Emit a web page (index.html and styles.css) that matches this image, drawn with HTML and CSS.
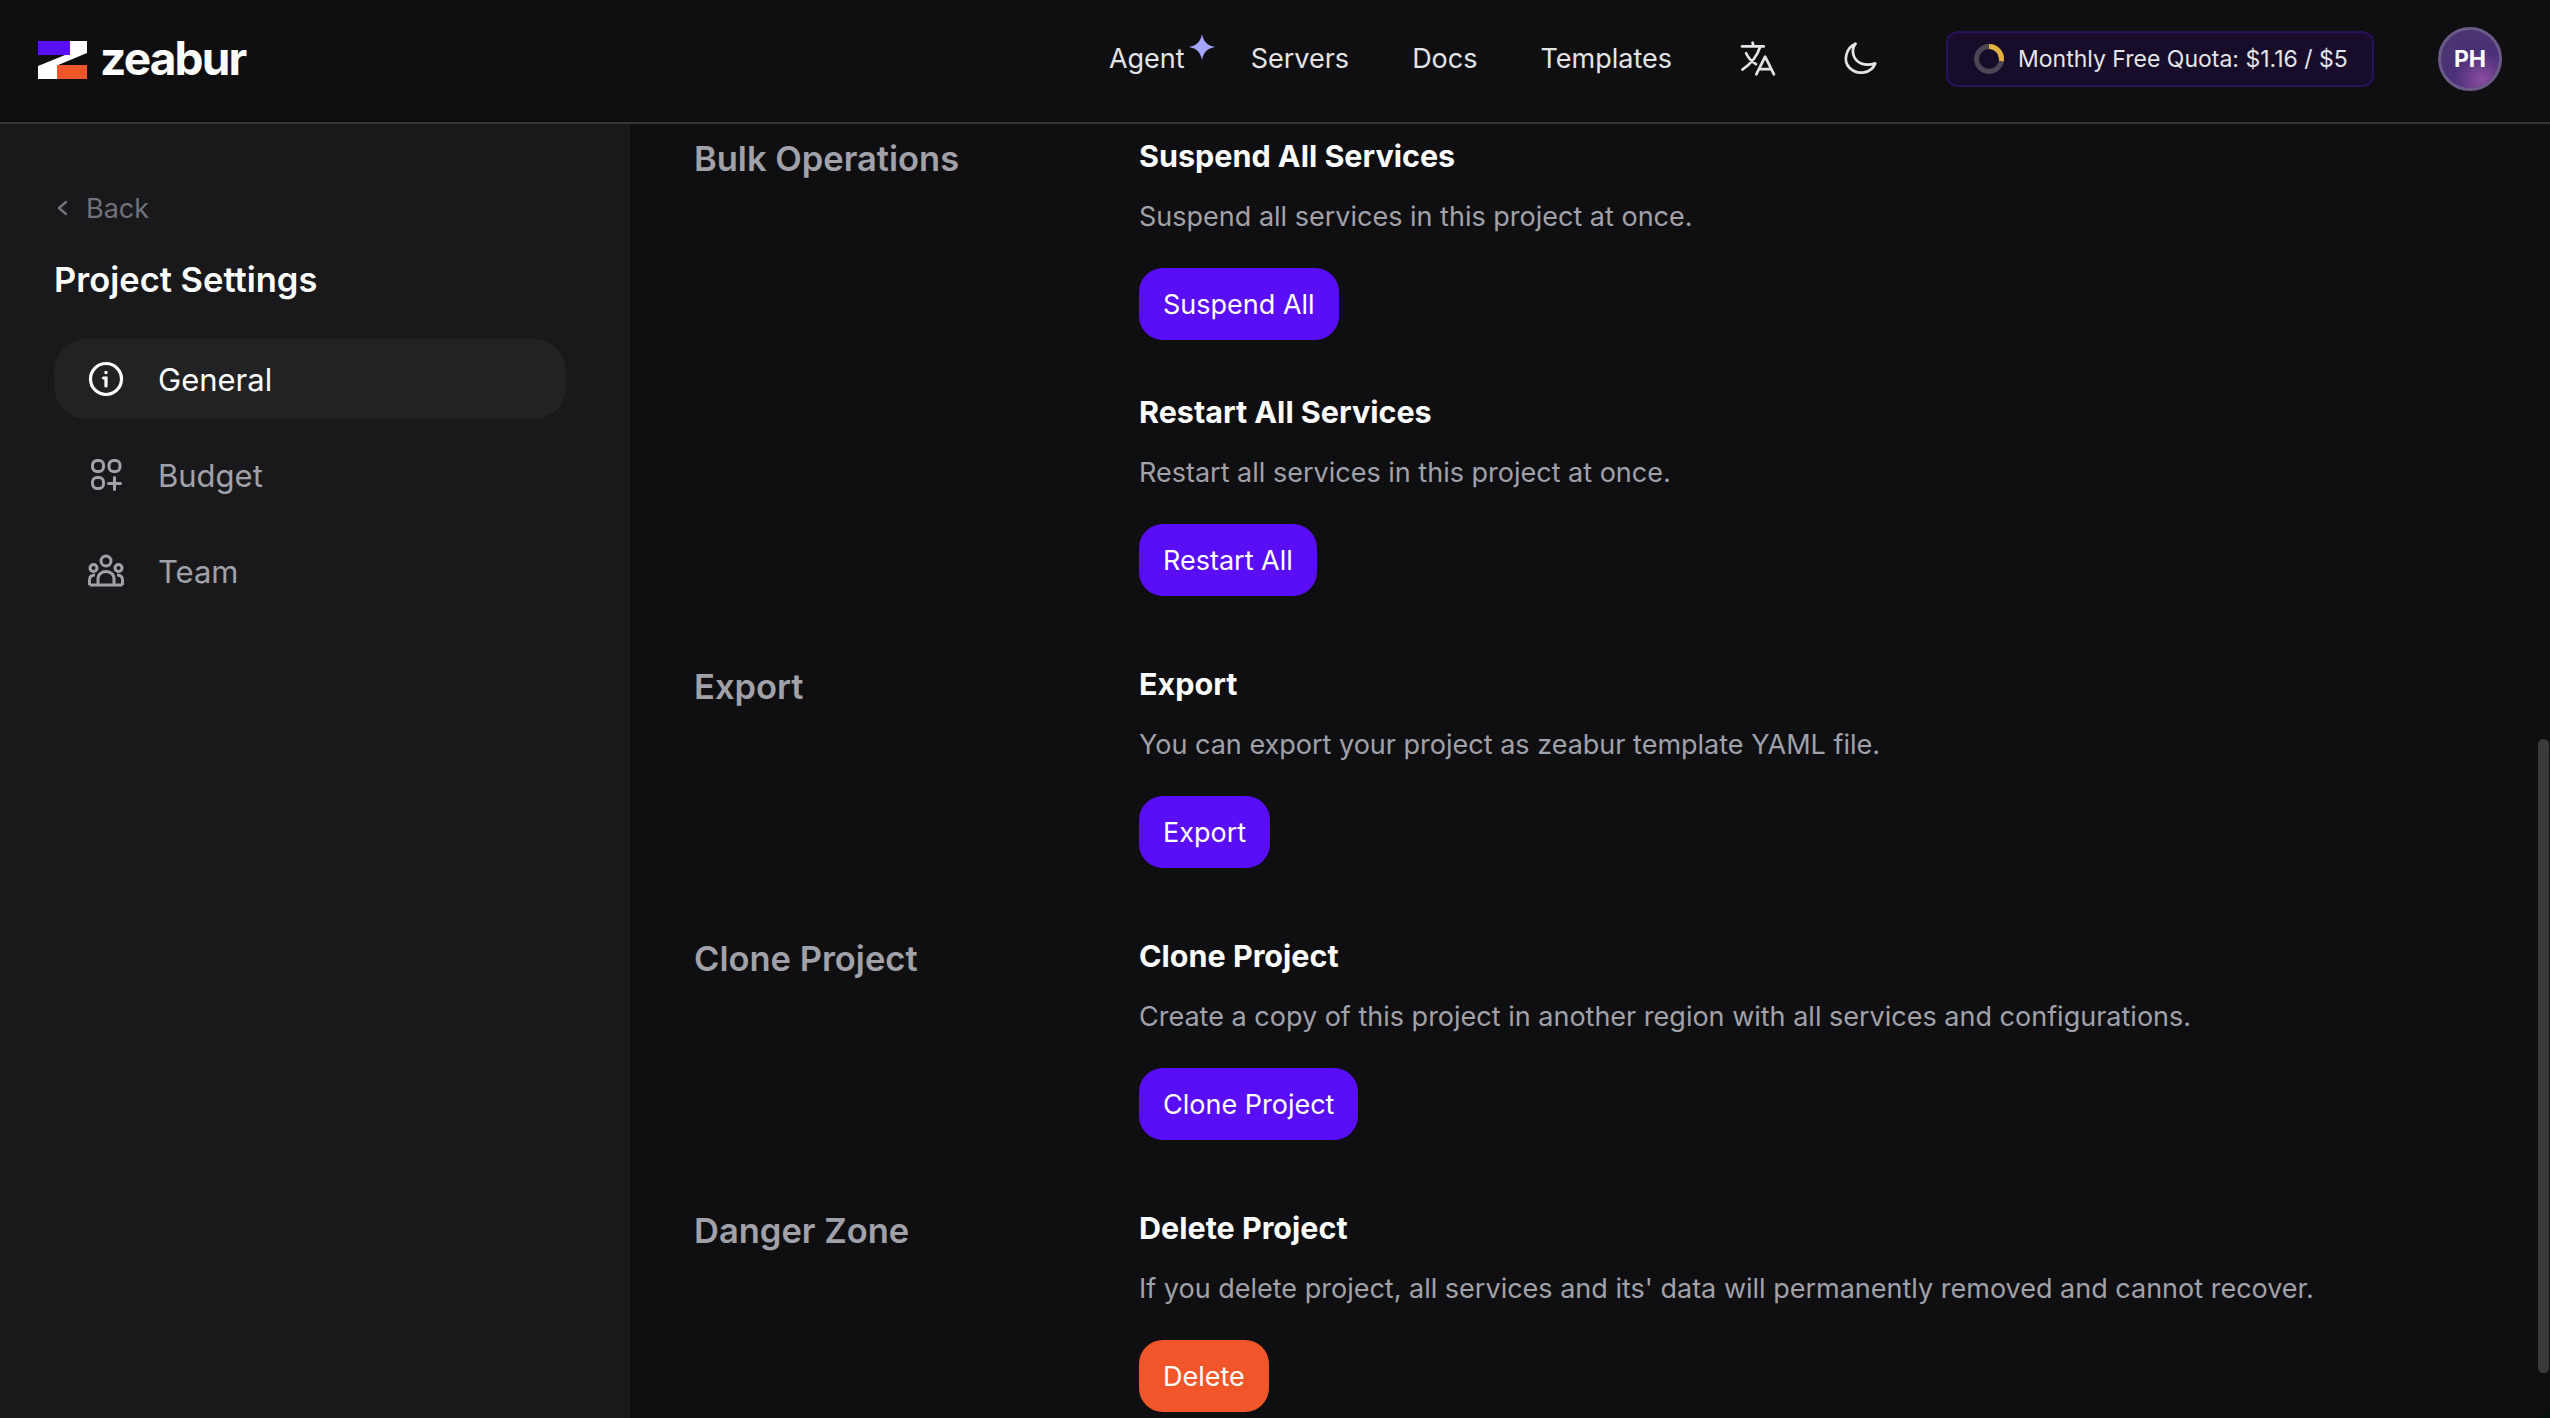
FILE: index.html
```html
<!DOCTYPE html>
<html lang="en">
<head>
<meta charset="utf-8">
<title>Project Settings</title>
<link rel="stylesheet" href="styles.css">
</head>
<body>
<div class="app">
  <header class="topbar">
    <a class="brand">
      <svg class="logo" viewBox="38 41 49 38" width="49" height="38">
        <path fill="#fff" d="M70 41H87V53L57 65.5V79H38V66L70 53Z"/>
        <rect fill="#5a0ef5" x="38" y="41" width="32" height="14"/>
        <rect fill="#f0562a" x="57" y="65" width="30" height="14"/>
      </svg>
      <span class="brand-name">zeabur</span>
    </a>
    <nav class="nav">
      <a class="nav-link agent">Agent
        <svg class="spark" viewBox="0 0 26 26" width="26" height="26"><path fill="#a5a5fb" d="M13 0C14.5 7.5 18 11.5 26 13C18 14.5 14.500 18.500 13 26C11.500 18.500 8 14.500 0 13C8 11.500 11.500 7.500 13 0Z"/></svg>
      </a>
      <a class="nav-link">Servers</a>
      <a class="nav-link">Docs</a>
      <a class="nav-link">Templates</a>
    </nav>
    <svg class="tool lang" viewBox="118 64 106 106" width="36" height="36" fill="none" stroke="#e4e4e7" stroke-width="8" stroke-linecap="round" stroke-linejoin="round">
      <path d="M124 80H188M155 69L158 80M178 80C168 110 150 132 125 148M136 100C143 115 153 125 165 132M166 162L192 110L218 162M174 147H210"/>
    </svg>
    <svg class="tool moon" viewBox="428 66 106 106" width="36" height="36" fill="none" stroke="#e4e4e7" stroke-width="8" stroke-linecap="round" stroke-linejoin="round">
      <path d="M468 74C440 85 430 125 450 145C475 170 515 160 526 132C495 142 468 130 462 108C458 95 460 84 468 74Z"/>
    </svg>
    <div class="quota">
      <svg class="ring" viewBox="0 0 30 30" width="30" height="30" fill="none" stroke-width="5">
        <circle cx="15" cy="15" r="12.500" stroke="#4b4654"/>
        <path d="M15 2.500A12.500 12.500 0 0 1 27.300 17" stroke="#e3b23c"/>
      </svg>
      <span class="quota-text">Monthly Free Quota: $1.16 / $5</span>
    </div>
    <div class="avatar">PH</div>
  </header>
  <div class="body">
    <aside class="sidebar">
      <a class="back">
        <svg viewBox="0 0 12 16" width="12" height="16" fill="none" stroke="#71717a" stroke-width="2.500" stroke-linecap="round" stroke-linejoin="round"><path d="M10 2L3 8L10 14"/></svg>
        <span>Back</span>
      </a>
      <h1 class="side-title">Project Settings</h1>
      <ul class="menu">
        <li class="menu-item active">
          <svg viewBox="0 0 36 36" width="36" height="36" fill="none" stroke="currentColor" stroke-width="3.200" stroke-linecap="round"><circle cx="18" cy="18" r="15.500"/><path d="M15.500 17H18V25"/><circle cx="18" cy="11.500" r="1" fill="currentColor" stroke-width="1.500"/></svg>
          <span>General</span>
        </li>
        <li class="menu-item">
          <svg viewBox="0 0 36 36" width="36" height="36" fill="none" stroke="currentColor" stroke-width="3" stroke-linecap="round"><rect x="4.500" y="3.500" width="11" height="11" rx="4.500"/><rect x="21" y="3.500" width="11" height="11" rx="4.500"/><rect x="4.500" y="20.500" width="11" height="11" rx="4.500"/><path d="M26.500 20.500V32.500M20.500 26.500H32.500"/></svg>
          <span>Budget</span>
        </li>
        <li class="menu-item">
          <svg viewBox="0 0 36 36" width="36" height="36" fill="none" stroke="currentColor" stroke-width="3" stroke-linejoin="round"><circle cx="18" cy="8" r="5"/><circle cx="5.500" cy="15" r="3.500"/><circle cx="30.500" cy="15" r="3.500"/><path d="M10 32V26C10 21 14 18.500 18 18.500C22 18.500 26 21 26 26V32M1.500 32V27C1.500 24 3.500 22 7 22M34.500 32V27C34.500 24 32.500 22 29 22M1.500 32H34.500"/></svg>
          <span>Team</span>
        </li>
      </ul>
    </aside>
    <main class="main">
      <section class="group">
        <h2 class="group-title">Bulk Operations</h2>
        <div class="items">
          <div class="item">
            <h3 class="item-title">Suspend All Services</h3>
            <p class="item-desc">Suspend all services in this project at once.</p>
            <button class="btn">Suspend All</button>
          </div>
          <div class="item">
            <h3 class="item-title">Restart All Services</h3>
            <p class="item-desc">Restart all services in this project at once.</p>
            <button class="btn">Restart All</button>
          </div>
        </div>
      </section>
      <section class="group">
        <h2 class="group-title">Export</h2>
        <div class="items">
          <div class="item">
            <h3 class="item-title">Export</h3>
            <p class="item-desc">You can export your project as zeabur template YAML file.</p>
            <button class="btn">Export</button>
          </div>
        </div>
      </section>
      <section class="group">
        <h2 class="group-title">Clone Project</h2>
        <div class="items">
          <div class="item">
            <h3 class="item-title">Clone Project</h3>
            <p class="item-desc">Create a copy of this project in another region with all services and configurations.</p>
            <button class="btn">Clone Project</button>
          </div>
        </div>
      </section>
      <section class="group">
        <h2 class="group-title">Danger Zone</h2>
        <div class="items">
          <div class="item">
            <h3 class="item-title">Delete Project</h3>
            <p class="item-desc">If you delete project, all services and its' data will permanently removed and cannot recover.</p>
            <button class="btn danger">Delete</button>
          </div>
        </div>
      </section>
      <div class="scrollbar"></div>
    </main>
  </div>
</div>
</body>
</html>
```
FILE: styles.css
```css
* { box-sizing: border-box; }
html, body { margin: 0; height: 100%; overflow: hidden; background: #06120f; }
body { font-family: "Inter", "Lato", sans-serif; color: #fff; }
.app { height: 100vh; display: flex; flex-direction: column; background: #0f0f11; border-bottom-right-radius: 16px; overflow: hidden; }
.topbar { height: 124px; flex: none; display: flex; align-items: center; padding: 0 48px 4px 38px; border-bottom: 2px solid #333338; background: #0f0f11; }
.brand { display: flex; align-items: center; gap: 13px; margin-right: auto; margin-top: 2px; }
.logo { display: block; }
.brand-name { font-weight: 700; font-size: 46px; letter-spacing: -1.8px; line-height: 46px; margin-top: -4px; }
.nav { display: flex; align-items: center; gap: 63px; margin-right: 68px; }
.nav-link { position: relative; font-size: 27px; line-height: 40px; color: #e4e4e7; }
.agent { margin-right: 3px; }
.spark { position: absolute; left: 80px; top: -5px; }
.tool { display: block; flex: none; }
.lang { margin-right: 66px; }
.moon { margin-right: 68px; }
.quota { width: 428px; height: 56px; flex: none; display: flex; align-items: center; gap: 14px; padding-left: 26px; background: #170d2a; border: 2px solid #28105a; border-radius: 12px; font-size: 23px; color: #e4e4e7; margin-right: 64px; }
.quota-text { white-space: nowrap; }
.ring { display: block; flex: none; }
.avatar { width: 64px; height: 64px; flex: none; border-radius: 50%; display: flex; align-items: center; justify-content: center; font-weight: 700; font-size: 23px; border: 3px solid #6a5a88; background: radial-gradient(circle at 70% 85%, #8a4c9e 0%, #4a2f78 45%, #4a3a6c 100%); }
.body { flex: 1; min-height: 0; display: flex; }
.sidebar { width: 630px; flex: none; background: #19191b; padding: 64px 40px 0 54px; }
.back { display: flex; align-items: center; gap: 18px; padding-left: 2px; height: 40px; font-size: 27px; color: #71717a; }
.back svg { display: block; }
.side-title { margin: 28px 0 0; font-size: 34.500px; line-height: 48px; font-weight: 600; color: #fff; }
.menu { list-style: none; margin: 35px 0 0; padding: 0; display: flex; flex-direction: column; gap: 16px; width: 512px; }
.menu-item { height: 80px; display: flex; align-items: center; gap: 34px; padding-left: 34px; border-radius: 32px; font-size: 31px; color: #a1a1aa; }
.menu-item svg { display: block; flex: none; }
.menu-item.active { background: #222224; color: #fff; }
.main { position: relative; flex: 1; min-width: 0; padding: 10px 0 0 64px; overflow: hidden; display: flex; flex-direction: column; gap: 66px; }
.group { display: grid; grid-template-columns: 445px 1fr; flex: none; }
.group-title { margin: 3px 0 0; font-size: 34.500px; line-height: 44px; font-weight: 600; color: #a1a1aa; }
.items { display: flex; flex-direction: column; gap: 50px; }
.item-title { margin: 0; font-size: 30.500px; line-height: 44px; font-weight: 700; color: #fff; }
.item-desc { margin: 19px 0 31px; font-size: 27px; line-height: 40px; color: #a1a1aa; }
.btn { display: block; height: 72px; padding: 0 24px; border: 0; border-radius: 24px; background: #5a0ef5; color: #fff; font: inherit; font-size: 27px; }
.btn.danger { background: #f0562a; }
.scrollbar { position: absolute; right: 1px; top: 615px; width: 11px; height: 634px; border-radius: 6px; background: #3a3a3a; }
```
